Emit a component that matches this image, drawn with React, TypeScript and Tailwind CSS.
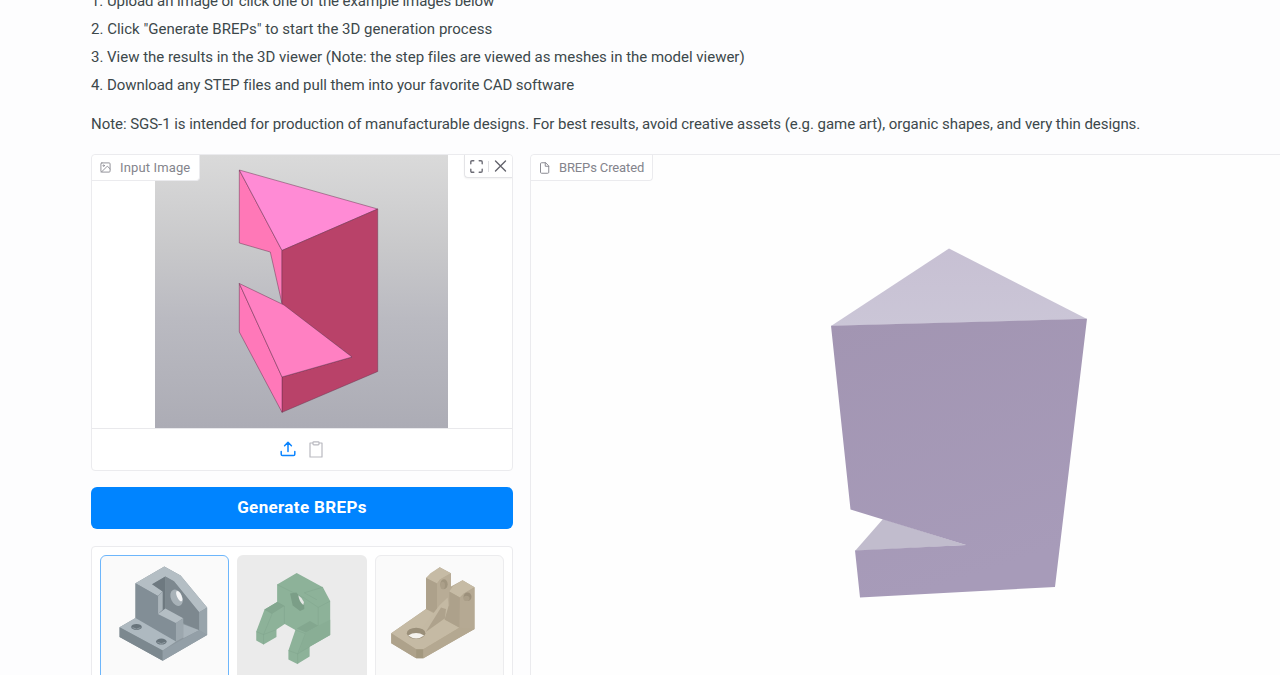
import type { ReactNode } from "react";

const steps = [
  { text: "1. Upload an image or click one of the example images below", spacing: "tracking-[-0.075px]" },
  { text: '2. Click "Generate BREPs" to start the 3D generation process', spacing: "tracking-[0.01px]" },
  {
    text: "3. View the results in the 3D viewer (Note: the step files are viewed as meshes in the model viewer)",
    spacing: "tracking-[-0.015px]",
  },
  { text: "4. Download any STEP files and pull them into your favorite CAD software", spacing: "tracking-[-0.06px]" },
];

const ImageIcon = () => (
  <svg className="w-[11px] h-[11px]" viewBox="0 0 24 24" fill="none" stroke="#8b8b93" strokeWidth="2" strokeLinecap="round" strokeLinejoin="round">
    <rect x="2" y="2" width="20" height="20" rx="2" />
    <circle cx="8" cy="8" r="1.6" />
    <path d="M22 15l-6-6L3 22" />
  </svg>
);

const FileIcon = () => (
  <svg className="w-[11px] h-[12px]" viewBox="0 0 22 24" fill="none" stroke="#8b8b93" strokeWidth="2" strokeLinecap="round" strokeLinejoin="round">
    <path d="M12.5 1.5H5a2 2 0 0 0-2 2v17a2 2 0 0 0 2 2h12.5a2 2 0 0 0 2-2V8.5z" />
    <path d="M12.5 1.5v7h7" />
  </svg>
);

const ExpandIcon = () => (
  <svg className="w-[13px] h-[13px]" viewBox="0 0 13 13" fill="none" stroke="#6d6d76" strokeWidth="1.4" strokeLinecap="round" strokeLinejoin="round">
    <path d="M.8 3.8V2Q.8.8 2 .8h1.8M9.2.8H11q1.2 0 1.2 1.2v1.8M12.2 9.2V11q0 1.2-1.2 1.2H9.2M3.8 12.2H2Q.8 12.2.8 11V9.2" />
  </svg>
);

const CloseIcon = () => (
  <svg className="w-[13px] h-[12px]" viewBox="0 0 13 12" fill="none" stroke="#62626b" strokeWidth="1.4" strokeLinecap="round">
    <path d="M1.5 1l10 10M11.5 1l-10 10" />
  </svg>
);

const UploadIcon = () => (
  <svg className="w-[16px] h-[16px]" viewBox="0 0 16 16" fill="none" stroke="#0a84ff" strokeWidth="1.5" strokeLinecap="round" strokeLinejoin="round">
    <path d="M1.2 10.5v2.7q0 1.3 1.3 1.3h11q1.3 0 1.3-1.3v-2.7M8 10.5V1.5M4.6 4.7L8 1.3l3.4 3.4" />
  </svg>
);

const ClipboardIcon = () => (
  <svg className="w-[14px] h-[17px]" viewBox="0 0 14 17" fill="none" stroke="#b9b9c0" strokeWidth="1.2" strokeLinejoin="round">
    <path d="M4 2H1v14h12V2h-3" />
    <rect x="4" y=".8" width="6" height="3" rx=".8" />
  </svg>
);

const InputModel = () => (
  <svg className="w-[293px] h-[273px]" viewBox="155 155 293 273">
    <defs>
      <linearGradient id="backdrop" x1="0" y1="0" x2="0" y2="1">
        <stop offset="0" stopColor="#dadada" />
        <stop offset="0.35" stopColor="#c8c8ca" />
        <stop offset="0.6" stopColor="#babac1" />
        <stop offset="1" stopColor="#acacb5" />
      </linearGradient>
    </defs>
    <rect x="155" y="154" width="293" height="274" fill="url(#backdrop)" />
    <g stroke="#6b3350" strokeOpacity=".7" strokeWidth=".7" strokeLinejoin="round">
      <path d="M239.3 170L282 250.500V303.500L270.300 252L239.300 243Z" fill="#ff78b7" />
      <path d="M239.3 170L377.700 209L282 250.500Z" fill="#ff8bd5" />
      <path d="M282 250.5L377.700 209V371.500L282 412.300V377L352 357L282 304Z" fill="#b94269" />
      <path d="M239.3 283.500L282 377V412.300L239.300 332Z" fill="#ff78b9" />
      <path d="M239.3 283.500L284 305L352 357L282 377Z" fill="#ff80c2" />
    </g>
  </svg>
);

const ResultModel = () => (
  <svg className="w-[258px] h-[351px]" viewBox="830 248 258 351">
    <defs>
      <linearGradient id="lid" x1="0" y1="0" x2="0" y2="1">
        <stop offset="0" stopColor="#c7c0d3" />
        <stop offset="1" stopColor="#cbc6d7" />
      </linearGradient>
      <linearGradient id="front" x1="0" y1="0" x2=".3" y2="1">
        <stop offset="0" stopColor="#a295b2" />
        <stop offset="1" stopColor="#a79bb9" />
      </linearGradient>
    </defs>
    <path d="M949 248.5L1087 319L831 326Z" fill="url(#lid)" />
    <path d="M883 519L966 545L855 551Z" fill="#c1bccd" />
    <path d="M831 325.7L1087 318.800L1055 587L860 597.500L855 550.500L966 545L850.500 509.500Z" fill="url(#front)" />
  </svg>
);

const SteelBracket = () => (
  <svg className="w-full h-full" viewBox="32 33 384 384">
    <path d="M223 64L272 91L352 187V270L218 348L88 276V247L136 219V114Z" fill="#8c979e" />
    <path d="M223 64L272 91L352 187L328 202L252 108L226 94L186 117L218 139L204 153L136 114Z" fill="#b4bec4" />
    <path d="M186 117L226 94V200L204 206V153L218 139Z" fill="#6e7980" />
    <path d="M226 94L252 108L328 202V256L283 236L226 190Z" fill="#7d888f" />
    <path d="M136 114L204 153V207L258 234V290L136 222Z" fill="#828e96" />
    <path d="M204 153L218 139V194L204 207Z" fill="#aab4ba" />
    <path d="M204 207L226 190L280 220L258 234Z" fill="#b4bec4" />
    <path d="M258 234L280 220V278L258 290Z" fill="#9ca7ae" />
    <path d="M280 238L328 256L280 280Z" fill="#a9b4bb" />
    <path d="M328 202L352 187V270L328 256Z" fill="#98a4ab" />
    <path d="M88 247L136 219L258 290L218 317Z" fill="#aeb9c0" />
    <path d="M88 247L218 317V348L88 276Z" fill="#7c888f" />
    <path d="M218 317L328 255L352 270L218 348Z" fill="#939fa7" />
    <ellipse cx="260" cy="158" rx="17" ry="26" transform="rotate(-25 260 158)" fill="#a8b2b8" />
    <ellipse cx="268" cy="153" rx="7" ry="17" transform="rotate(-25 268 153)" fill="#f4f5f6" />
    <ellipse cx="139" cy="246" rx="16" ry="9" fill="#68747b" />
    <ellipse cx="214" cy="290" rx="16" ry="9" fill="#68747b" />
    <path d="M127 248q12 9 24 0M202 292q12 9 24 0" fill="none" stroke="#8e9aa1" strokeWidth="3" />
  </svg>
);

const GreenClamp = () => (
  <svg className="w-full h-full" viewBox="20 31 390 390">
    <path d="M200 84L279 127L301 169V271L239 307V336L202 359L175 345V318L196 256L164 238L139 255V277L100 300L78 288V261L103 194L141 172V119Z" fill="#8db299" />
    <path d="M103 194L141 172L163 184L126 207ZM200 252L240 229L265 243L228 264Z" fill="#83a78f" />
    <path d="M228 264L265 243L301 225V271L239 307L207 325Z" fill="#89ae95" />
    <path d="M141 119L223 160L265 188L301 169M223 144L261 165M265 188V243M141 172L163 184V238M103 194L126 207L100 270V300M78 261L100 270L139 255M196 256L226 267L203 328V359M175 318L203 328L239 307M223 144L279 127" fill="none" stroke="#7da089" strokeWidth="1.2" />
    <path d="M180 146L199 143L222 171L223 193L210 199L188 182Z" fill="#7b9e87" />
    <path d="M205 151Q216 158 222 172L220 181Q207 169 205 151Z" fill="#e5e8e5" />
  </svg>
);

const SandMount = () => (
  <svg className="w-full h-full" viewBox="24 31 384 384">
    <path d="M70 263L175 190V96L216 64L250 82V122L285 103L321 124V250L167 338H145L70 293Z" fill="#b6aa93" />
    <path d="M70 263L175 190L275 246L167 311H145Z" fill="#c5baa4" />
    <path d="M175 96L188 82L216 64L250 82L217 101L208 113Z" fill="#c6bba5" />
    <path d="M175 96L208 113V204L175 190Z" fill="#ada18b" />
    <path d="M208 113L217 101L250 82V205L208 210Z" fill="#b8ac96" />
    <path d="M245 137L256 121L285 103L321 124L289 143L277 155Z" fill="#c6bba5" />
    <path d="M245 137L277 155V246L232 222V180L245 180Z" fill="#ada18b" />
    <path d="M277 155L289 143L321 124V250L275 275Z" fill="#b5a993" />
    <path d="M162 249L215 179L240 155L243 180L232 218L174 259Z" fill="#c4b9a3" />
    <path d="M174 259L220 185L235 190L232 218Z" fill="#aea28c" />
    <path d="M70 263L145 311V338L70 293Z" fill="#aea28b" />
    <path d="M145 311H167V338H145Z" fill="#a3987f" />
    <path d="M167 311L275 246L321 250L167 338Z" fill="#b4a891" />
    <ellipse cx="229" cy="115" rx="11" ry="15" fill="#a0957f" />
    <ellipse cx="225" cy="119" rx="7" ry="11" fill="#ab9f89" />
    <ellipse cx="300" cy="153" rx="12" ry="13" fill="#9c907b" />
    <ellipse cx="297" cy="158" rx="9" ry="8" fill="#aa9e88" />
    <ellipse cx="145" cy="263" rx="28" ry="17" fill="#9a8f79" />
    <path d="M121 270Q145 255 169 270Q145 288 121 270Z" fill="#f5f3ee" />
  </svg>
);

const BlockLabel = ({ icon, children, className }: { icon: ReactNode; children: ReactNode; className: string }) => (
  <div className={`absolute top-0 left-0 flex items-center h-[26px] gap-2 pl-2 bg-white border-r border-b border-[#ebebee] rounded-tl rounded-br-sm text-[13px] text-[#84848c] whitespace-nowrap ${className}`}>
    {icon}
    <span>{children}</span>
  </div>
);

const InputPanel = () => (
  <div className="relative h-[317px] flex flex-col bg-white border border-[#ebebee] rounded overflow-hidden">
    <div className="flex h-[273px] pl-[63px]">
      <InputModel />
    </div>
    <div className="flex flex-1 items-center justify-center gap-[13px] pr-px pb-px border-t border-[#e9e9ec]">
      <UploadIcon />
      <ClipboardIcon />
    </div>
    <BlockLabel icon={<ImageIcon />} className="w-[108px]">
      <span className="pl-px tracking-[0.14px]">Input Image</span>
    </BlockLabel>
    <div className="absolute top-0 right-0 flex items-center w-[48px] h-[23px] gap-[5px] pl-[5px] bg-white border-l border-b border-[#e4e4e7] rounded-bl-sm shadow-xs">
      <ExpandIcon />
      <span className="w-px h-[11px] bg-[#dedee1]" />
      <CloseIcon />
    </div>
  </div>
);

const Examples = () => (
  <div className="flex gap-2 mt-[17px] h-[146px] pt-2 px-2 bg-white border border-[#ebebee] rounded">
    <div className="w-[130px] h-[130px] bg-[#fafafa] border border-[#6db6fb] rounded-md overflow-hidden">
      <SteelBracket />
    </div>
    <div className="w-[130px] h-[130px] bg-[#ebebeb] rounded-md overflow-hidden">
      <GreenClamp />
    </div>
    <div className="w-[130px] h-[130px] bg-[#fafafa] border border-[#ececee] rounded-md overflow-hidden">
      <SandMount />
    </div>
  </div>
);

const App = () => {
  return (
    <main className="w-full h-[675px] overflow-hidden bg-[#fdfdfe] pl-[91px] font-['Roboto',sans-serif] text-[#3c484b]">
      <div className="-mt-[13px] text-[15px] leading-7 whitespace-nowrap">
        {steps.map((step) => (
          <p key={step.text}>
            <span className={step.spacing}>{step.text}</span>
          </p>
        ))}
        <p className="mt-[11px]">
          <span className="tracking-[-0.051px]">
            Note: SGS-1 is intended for production of manufacturable designs. For best results, avoid creative assets (e.g. game art), organic shapes, and very thin designs.
          </span>
        </p>
      </div>

      <div className="flex gap-[17px] mt-4">
        <div className="w-[422px] shrink-0">
          <InputPanel />
          <button className="block w-full h-[42px] mt-4 rounded-md bg-[#0084ff] text-white text-[17px] font-bold tracking-[0.36px]">
            Generate BREPs
          </button>
          <Examples />
        </div>

        <div className="relative w-[800px] h-[560px] shrink-0 pl-[299px] pt-[93px] bg-[#fefefe] border border-[#ebebee] rounded">
          <BlockLabel icon={<FileIcon />} className="w-[122px]">
            <span className="pl-px tracking-[-0.13px]">BREPs Created</span>
          </BlockLabel>
          <ResultModel />
        </div>
      </div>
    </main>
  );
};

export default App;
